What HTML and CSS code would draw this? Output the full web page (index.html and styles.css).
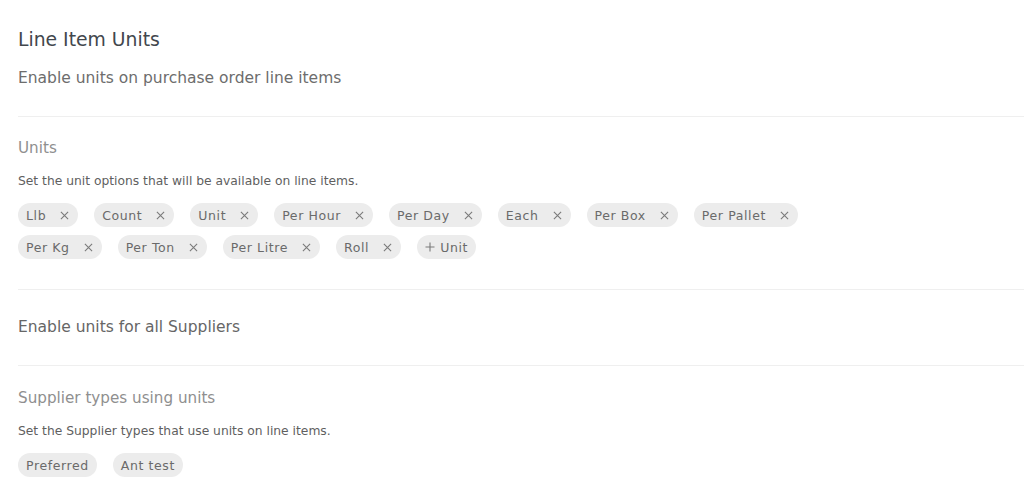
FILE: index.html
```html
<!DOCTYPE html>
<html lang="en">
<head>
    <meta charset="UTF-8">
    <meta name="viewport" content="width=device-width, initial-scale=1.0">
    <title>Line Item Units</title>
    <link rel="stylesheet" href="styles.css">
</head>
<body>
    <div class="page">
        <div class="section header">
            <h1>Line Item Units</h1>
            <p class="subtitle">Enable units on purchase order line items</p>
        </div>

        <div class="section units">
            <h2>Units</h2>
            <p class="desc">Set the unit options that will be available on line items.</p>
            <div class="chips">
                <span class="chip">Llb<svg class="x" viewBox="0 0 10 10"><path d="M1 1L9 9M9 1L1 9"/></svg></span>
                <span class="chip">Count<svg class="x" viewBox="0 0 10 10"><path d="M1 1L9 9M9 1L1 9"/></svg></span>
                <span class="chip">Unit<svg class="x" viewBox="0 0 10 10"><path d="M1 1L9 9M9 1L1 9"/></svg></span>
                <span class="chip">Per Hour<svg class="x" viewBox="0 0 10 10"><path d="M1 1L9 9M9 1L1 9"/></svg></span>
                <span class="chip">Per Day<svg class="x" viewBox="0 0 10 10"><path d="M1 1L9 9M9 1L1 9"/></svg></span>
                <span class="chip">Each<svg class="x" viewBox="0 0 10 10"><path d="M1 1L9 9M9 1L1 9"/></svg></span>
                <span class="chip">Per Box<svg class="x" viewBox="0 0 10 10"><path d="M1 1L9 9M9 1L1 9"/></svg></span>
                <span class="chip">Per Pallet<svg class="x" viewBox="0 0 10 10"><path d="M1 1L9 9M9 1L1 9"/></svg></span>
                <span class="chip">Per Kg<svg class="x" viewBox="0 0 10 10"><path d="M1 1L9 9M9 1L1 9"/></svg></span>
                <span class="chip">Per Ton<svg class="x" viewBox="0 0 10 10"><path d="M1 1L9 9M9 1L1 9"/></svg></span>
                <span class="chip">Per Litre<svg class="x" viewBox="0 0 10 10"><path d="M1 1L9 9M9 1L1 9"/></svg></span>
                <span class="chip">Roll<svg class="x" viewBox="0 0 10 10"><path d="M1 1L9 9M9 1L1 9"/></svg></span>
                <span class="chip add"><svg class="plus" viewBox="0 0 10 10"><path d="M5 0.5V9.5M0.5 5H9.5"/></svg>Unit</span>
            </div>
        </div>

        <div class="section all">
            <p class="label">Enable units for all Suppliers</p>
        </div>

        <div class="section types">
            <h2>Supplier types using units</h2>
            <p class="desc">Set the Supplier types that use units on line items.</p>
            <div class="chips">
                <span class="chip plain">Preferred</span>
                <span class="chip plain">Ant test</span>
            </div>
        </div>
    </div>
</body>
</html>
```

FILE: styles.css
```css
body {
    margin: 0;
    font-family: 'DejaVu Sans', sans-serif;
    background-color: #fff;
    color: #555;
}

.page {
    padding-left: 18px;
}

.section {
    border-bottom: 1px solid #efefef;
}

.section:last-child {
    border-bottom: none;
}

h1, h2, p {
    margin: 0;
}

.header {
    padding: 28px 0 26px;
}

h1 {
    font-size: 18.8px;
    font-weight: normal;
    line-height: 24px;
    color: #42474d;
}

.subtitle {
    margin-top: 14px;
    font-size: 15.5px;
    line-height: 24px;
    color: #6d6d6d;
}

.units {
    padding: 20px 0 30px;
}

h2 {
    font-size: 15.2px;
    font-weight: normal;
    line-height: 22px;
    color: #8f8f8f;
}

.desc {
    margin-top: 13px;
    font-size: 12.3px;
    line-height: 18px;
    color: #5f5f5f;
}

.chips {
    display: flex;
    flex-wrap: wrap;
    gap: 8px 16px;
    margin-top: 13px;
    max-width: 800px;
}

.chip {
    display: inline-flex;
    align-items: center;
    height: 24px;
    padding: 0 9px 0 8px;
    border-radius: 12px;
    background-color: #ececec;
    font-size: 12.5px;
    letter-spacing: 0.6px;
    color: #6a6a6a;
}

.chip.plain {
    padding: 0 8px;
}

.x {
    width: 9px;
    height: 9px;
    margin-left: 14px;
    fill: none;
    stroke: #7a7a7a;
    stroke-width: 1.2;
}

.plus {
    width: 10px;
    height: 10px;
    margin-right: 5px;
    fill: none;
    stroke: #7a7a7a;
    stroke-width: 1.1;
}

.chip.add {
    padding: 0 8px 0 8px;
}

.all {
    padding: 26px 0 27px;
}

.label {
    font-size: 15.5px;
    line-height: 22px;
    color: #666;
}

.types {
    padding: 21px 0 24px;
}
```
